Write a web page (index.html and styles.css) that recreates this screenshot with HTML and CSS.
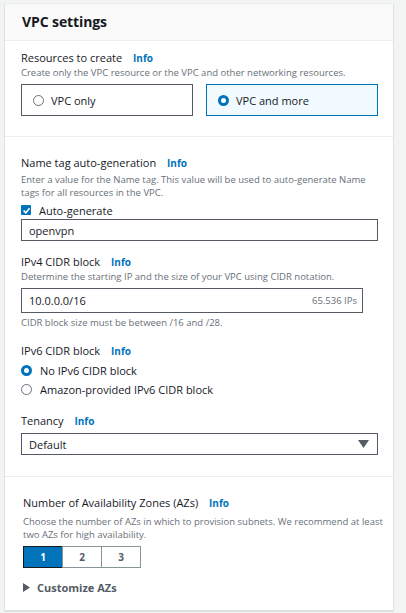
FILE: index.html
```html
<!DOCTYPE html>
<html>
<head>
<meta charset="utf-8">
<link rel="stylesheet" href="styles.css">
</head>
<body>
<div class="card">
  <div class="card-header"><h2>VPC settings</h2></div>

  <div class="section s1">
    <div class="label">Resources to create <span class="info">Info</span></div>
    <div class="desc">Create only the VPC resource or the VPC and other networking resources.</div>
    <div class="tiles">
      <div class="tile"><span class="radio"></span>VPC only</div>
      <div class="tile selected"><span class="radio on"></span>VPC and more</div>
    </div>
  </div>

  <div class="section s2">
    <div class="label">Name tag auto-generation <span class="info">Info</span></div>
    <div class="desc two">Enter a value for the Name tag. This value will be used to auto-generate Name<br>tags for all resources in the VPC.</div>
    <div class="check-row">
      <span class="checkbox"><svg width="9" height="9" viewBox="0 0 10 10"><path d="M1.8 5.2 L4.2 7.5 L8.4 2.4" fill="none" stroke="#fff" stroke-width="1.8"/></svg></span>Auto-generate
    </div>
    <div class="input name-input">openvpn</div>

    <div class="label gap">IPv4 CIDR block <span class="info">Info</span></div>
    <div class="desc">Determine the starting IP and the size of your VPC using CIDR notation.</div>
    <div class="input cidr-input"><span>10.0.0.0/16</span><span class="suffix">65.536 IPs</span></div>
    <div class="desc constraint">CIDR block size must be between /16 and /28.</div>

    <div class="label gap">IPv6 CIDR block <span class="info">Info</span></div>
    <div class="radio-list">
      <div class="radio-row"><span class="radio on"></span>No IPv6 CIDR block</div>
      <div class="radio-row"><span class="radio"></span>Amazon-provided IPv6 CIDR block</div>
    </div>

    <div class="label gap tenancy">Tenancy <span class="info">Info</span></div>
    <div class="input select">Default<svg class="caret" width="11" height="8" viewBox="0 0 11 8"><path d="M0 0 H11 L5.5 8 Z" fill="#545b64"/></svg></div>
  </div>

  <div class="section s3">
    <div class="label">Number of Availability Zones (AZs) <span class="info">Info</span></div>
    <div class="desc two">Choose the number of AZs in which to provision subnets. We recommend at least<br>two AZs for high availability.</div>
    <div class="seg">
      <div class="seg-btn active">1</div>
      <div class="seg-btn">2</div>
      <div class="seg-btn">3</div>
    </div>
    <div class="expander"><svg width="7" height="9" viewBox="0 0 7 9"><path d="M0 0 L7 4.5 L0 9 Z" fill="#545b64"/></svg>Customize AZs</div>
  </div>
</div>
</body>
</html>
```

FILE: styles.css
```css
* { box-sizing: border-box; }
html, body { margin: 0; padding: 0; }
body {
  background: #f2f3f3;
  font-family: "Open Sans", "Noto Sans", sans-serif;
  color: #16191f;
  width: 406px;
  height: 613px;
  overflow: hidden;
}
.card {
  margin: 3px 12px 0 4px;
  background: #fff;
  border: 1px solid #dfe2e2;
  border-top-color: #eaeded;
}
.card-header {
  height: 37px;
  background: #fafafa;
  border-bottom: 1px solid #eaeded;
  display: flex;
  align-items: center;
  padding: 0 0 2px 17px;
}
.card-header h2 {
  margin: 0;
  font-size: 14px;
  font-weight: 700;
  letter-spacing: -0.1px;
}
.section { padding: 0 15px 0 16px; border-bottom: 1px solid #eaeded; }
.s1 { padding-top: 9px; padding-bottom: 20px; }
.s2 { padding-top: 18px; padding-bottom: 21px; }
.s3 { padding-top: 18px; padding-bottom: 15px; padding-left: 18px; border-bottom: 1px solid #dfe2e2; }
.label {
  font-size: 11px;
  line-height: 16px;
  color: #16191f;
  white-space: nowrap;
}
.label.gap { margin-top: 13px; }
.label.tenancy { margin-top: 14px; }
.info {
  color: #0073bb;
  font-weight: 700;
  font-size: 10px;
  margin-left: 8px;
}
.desc {
  font-size: 9.5px;
  line-height: 14px;
  color: #687078;
  white-space: nowrap;
}
.desc.two { line-height: 13px; margin-top: 2px; }
.s3 .desc.two { margin-top: 4px; }
.tiles {
  margin-top: 4px;
  display: grid;
  grid-template-columns: 1fr 1fr;
  column-gap: 13px;
}
.tile {
  height: 32px;
  border: 1px solid #545b64;
  display: flex;
  align-items: center;
  padding-left: 11px;
  font-size: 11px;
}
.tile.selected {
  border-color: #0073bb;
  background: #f1faff;
}
.radio {
  width: 11px;
  height: 11px;
  border-radius: 50%;
  border: 1px solid #687078;
  background: #fff;
  margin-right: 7px;
  flex: none;
}
.radio.on {
  border: 3.5px solid #0073bb;
}
.check-row {
  margin-top: 4px;
  height: 14px;
  display: flex;
  align-items: center;
  font-size: 11px;
}
.checkbox {
  width: 10px;
  height: 10px;
  background: #0073bb;
  border-radius: 1px;
  margin-right: 8px;
  display: flex;
  align-items: center;
  justify-content: center;
}
.input {
  border: 1px solid #545b64;
  display: flex;
  align-items: center;
  padding-left: 7px;
  font-size: 11px;
}
.name-input { margin-top: 2px; height: 22px; }
.cidr-input {
  margin-top: 4px;
  height: 25px;
  width: 342px;
  justify-content: space-between;
  padding-right: 5px;
}
.suffix { font-size: 9.5px; color: #687078; }
.constraint { margin-top: 3px; }
.radio-list { margin-top: 2px; }
.radio-row {
  height: 19px;
  display: flex;
  align-items: center;
  font-size: 11px;
}
.radio-row .radio { margin-right: 8px; }
.select {
  margin-top: 4px;
  height: 22px;
  justify-content: space-between;
  padding-right: 8px;
}
.seg {
  margin-top: 5px;
  display: flex;
}
.seg-btn {
  width: 40px;
  height: 22px;
  border: 1px solid #879596;
  margin-left: -1px;
  display: flex;
  align-items: center;
  justify-content: center;
  font-size: 10px;
  font-weight: 700;
  color: #545b64;
}
.seg-btn:first-child { margin-left: 0; }
.seg-btn.active {
  background: #0073bb;
  border-color: #16191f;
  color: #fff;
}
.expander {
  margin-top: 11px;
  height: 16px;
  display: flex;
  align-items: center;
  font-size: 11px;
  font-weight: 700;
  color: #545b64;
}
.expander svg { margin-right: 7px; }
```
